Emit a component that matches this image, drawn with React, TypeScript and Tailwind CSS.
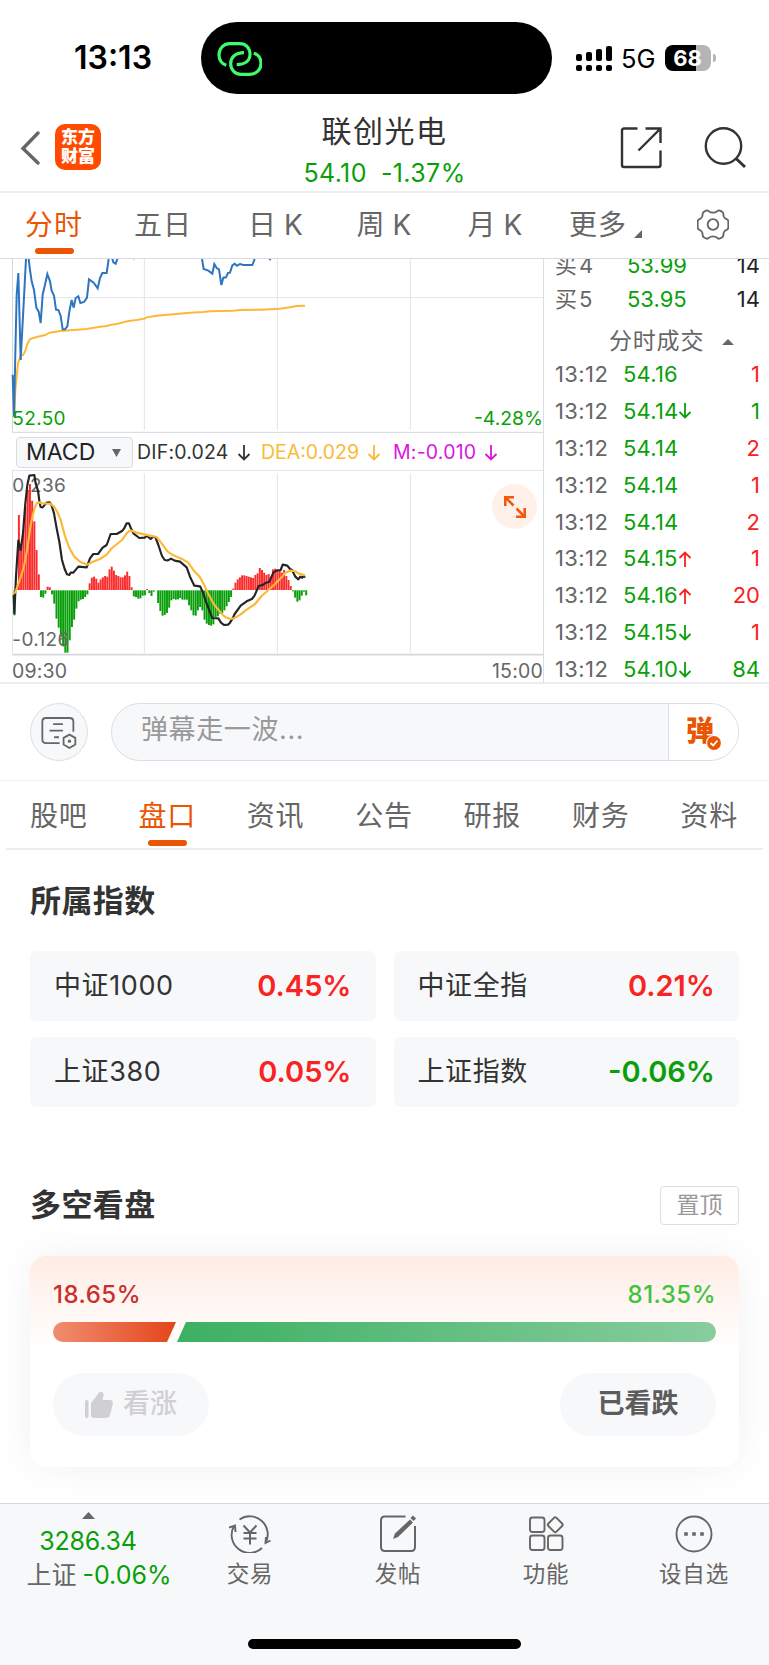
import type { ReactNode } from 'react';

interface Trade {
  price: string;
  dir?: 'up' | 'down';
  qty: string;
  sell?: boolean;
}

const trades: Trade[] = [
  { price: '54.16', qty: '1' },
  { price: '54.14', dir: 'down', qty: '1', sell: true },
  { price: '54.14', qty: '2' },
  { price: '54.14', qty: '1' },
  { price: '54.14', qty: '2' },
  { price: '54.15', dir: 'up', qty: '1' },
  { price: '54.16', dir: 'up', qty: '20' },
  { price: '54.15', dir: 'down', qty: '1' },
  { price: '54.10', dir: 'down', qty: '84', sell: true },
];

const bids = [
  { label: '买4', price: '53.99', qty: '14' },
  { label: '买5', price: '53.95', qty: '14' },
];

const indexes = [
  { name: '中证1000', change: '0.45%' },
  { name: '中证全指', change: '0.21%' },
  { name: '上证380', change: '0.05%' },
  { name: '上证指数', change: '-0.06%' },
];

const infoTabs = ['股吧', '盘口', '资讯', '公告', '研报', '财务', '资料'];

// MACD histogram, one value per minute
const bars = [
  -75, 12, 225, 130, 180, 250, 300, 318, 268, 206, 120, 47, -20, -22, -10, 10, 8, -12, -40, -85,
  -112, -140, -168, -187, -187, -150, -110, -88, -55, -33, -28, -26, -20, -12, 20, 37, 40, 34, 22, 32,
  38, 42, 40, 62, 70, 58, 45, 42, 38, 38, 44, 55, 42, 8, -18, -20, -25, -24, -16, -15,
  3, -8, -17, -4, 0, -38, -62, -76, -74, -68, -52, -30, -26, -28, -27, -23, -28, -28, -28, -45,
  -60, -75, -76, -60, -50, -60, -88, -100, -104, -106, -102, -80, -78, -70, -68, -60, -48, -35, -20, 4,
  22, 32, 38, 44, 44, 42, 40, 38, 36, 45, 50, 66, 60, 52, 45, 48, 40, 62, 64, 60,
  58, 52, 60, 42, 30, 12, -3, -22, -34, -30, -16, -4, -15,
];

function StatusBar() {
  const signal = [7, 9, 12, 15];
  return (
    <div className="flex h-[112px] pt-[22px]">
      <div className="flex h-[72px] w-[201px] items-center pl-[74px] text-[32px] font-semibold text-black">
        13:13
      </div>
      <div className="flex h-[72px] w-[351px] items-center rounded-full bg-black pl-[15px]">
        <svg className="h-9 w-[46px]" viewBox="0 0 138 108" fill="none" stroke="#3dfb6c" strokeWidth="9.5" strokeLinecap="butt">
          <path d="M31 76C17 71 9 60 9 45C9 26 22 11 41 11H71C90 11 102 24 102 43C102 62 88 74 62 74" />
          <path d="M84 38C58 38 44 52 44 71C44 88 56 103 75 103H101C121 103 135 89 135 70C135 56 127 44 113 40" />
        </svg>
      </div>
      <div className="flex h-[72px] items-center pl-6">
        <div className="flex items-end gap-1">
          {signal.map((h) => (
            <div key={h} className="flex flex-col gap-1">
              <div className="w-1.5 rounded-[2px] bg-black" style={{ height: h }} />
              <div className="h-1.5 w-1.5 rounded-[2px] bg-black" />
            </div>
          ))}
        </div>
        <span className="ml-[9px] pt-0.5 text-[25.5px] text-black">5G</span>
        <div className="ml-[9px] flex h-[26px] w-[46px] items-center justify-center rounded-[8px] bg-[linear-gradient(90deg,#000_68%,#b5b5b5_68%)] text-[22px] font-bold text-white">
          68
        </div>
        <div className="ml-0.5 h-2 w-[3px] rounded-r-full bg-[#b5b5b5]" />
      </div>
    </div>
  );
}

function Header() {
  return (
    <header className="flex h-[81px] border-b-2 border-[#ececee]">
      <div className="flex w-[284px] items-start pt-3 pl-5">
        <svg className="mt-[7px] h-[34px] w-5" viewBox="0 0 20 34" fill="none" stroke="#666" strokeWidth="3.4" strokeLinecap="round">
          <path d="M18 2L3 17.5L18 32" strokeLinejoin="miter" />
        </svg>
        <div className="ml-[15px] flex h-[46px] w-[46px] flex-col items-center justify-center rounded-[10px] bg-[#ff4a00] text-[17px] leading-[19px] font-black text-white">
          <span>东方</span>
          <span>财富</span>
        </div>
      </div>
      <div className="w-[201px] text-center">
        <div className="h-[42px] text-[30px] leading-[38px] tracking-[1.5px] text-[#333]">联创光电</div>
        <div className="flex justify-center gap-[14px] text-[25px] leading-[38px] tracking-[0.4px] text-[#0a9f0a]">
          <span>54.10</span>
          <span>-1.37%</span>
        </div>
      </div>
      <div className="flex flex-1 items-start gap-[42px] pt-[14px] pl-[135px]">
        <svg className="h-[43px] w-[42px]" viewBox="0 0 42 43" fill="none" stroke="#333" strokeWidth="2.4">
          <path d="M17.500 2.500H4Q2 2.500 2 4.500V39Q2 41 4 41H38.500Q40.500 41 40.500 39V24.500M25.500 2.500H40.500V17M40 3L18.500 24.500" />
        </svg>
        <svg className="h-[43px] w-[42px]" viewBox="0 0 42 43" fill="none" stroke="#333" strokeWidth="2.4">
          <circle cx="19.500" cy="20" r="17.700" />
          <path d="M31.500 32L41 41" strokeWidth="3" />
        </svg>
      </div>
    </header>
  );
}

function PeriodTabs() {
  return (
    <nav className="flex h-[66px] border-b border-[#d9dbe3] pt-2.5 text-[28px] leading-[44px] tracking-[1px] text-[#666]">
      <div className="flex w-[108px] flex-col items-center text-[#ea5504]">
        <span>分时</span>
        <div className="mt-[0.5px] h-[6px] w-[39px] rounded-full bg-[#ea5504]" />
      </div>
      <div className="w-[110px] text-center">五日</div>
      <div className="flex w-[116px] justify-center gap-[7px]">
        日<span>K</span>
      </div>
      <div className="flex w-[101px] justify-center gap-[7px]">
        周<span>K</span>
      </div>
      <div className="flex w-[121px] justify-center gap-[7px]">
        月<span>K</span>
      </div>
      <div className="flex w-[90px] items-start pl-[13px] whitespace-nowrap">
        更多
        <svg className="mt-[27px] ml-[7px] h-2 w-2 shrink-0" viewBox="0 0 8 8" fill="#666">
          <path d="M8 0V8H0Z" />
        </svg>
      </div>
      <div className="flex flex-1 justify-center pt-1.5 pl-2.5">
        <svg className="h-[31px] w-8" viewBox="0 0 96 93" fill="none" stroke="#666" strokeWidth="5.5" strokeLinejoin="round">
          <path d="M29 4Q33 4 36 7Q40 11 48 11Q56 11 60 7Q63 4 67 4Q78 8 79 13Q79 18 80 22Q82 28 90 31Q94 33 94 38V55Q94 60 90 62Q82 65 80 71Q79 76 79 80Q78 86 67 89Q63 90 60 86Q56 82 48 82Q40 82 36 86Q33 90 29 89Q18 86 17 80Q17 76 16 71Q14 65 6 62Q2 60 2 55V38Q2 33 6 31Q14 28 16 22Q17 18 17 13Q18 8 29 4Z" />
          <circle cx="48" cy="46.500" r="16" />
        </svg>
      </div>
    </nav>
  );
}

function PriceChart() {
  return (
    <svg className="block h-[174px] w-[543px]" viewBox="0 27 1629 522" fill="none">
      <path d="M37 143H1632M433 27V541M832 27V541M1231 27V541" stroke="#e2e4ec" strokeWidth="3" />
      <path d="M37.500 27V547M37 547H1632" stroke="#d5d7df" strokeWidth="3" />
      <path
        d="M43 500L46 420L54 340L62 318L70 314L76 302L82 282L90 267L110 261L136 255L148 248L180 243L210 241L260 237L300 230L320 228L330 225L350 222L385 213L410 210L434 206L440 202L470 197L520 193L570 188L610 186L630 184L700 182L720 180L780 179L840 176L870 172L890 168L915 167"
        stroke="#fbb937"
        strokeWidth="6"
      />
      <path
        d="M38 374L42 500L46 310L50 135L55 69L62 330L70 180L78 27M86 27L90 60L95 94L102 120L109 173L116 185L122 219L128 134L135 104L142 72L150 94L155 122L162 137L168 179L175 180L182 198L188 238L195 238L202 229L208 185L215 150L221 173L227 144L235 139L241 159L252 156L261 143L267 88L281 98L293 115L300 84L307 69L320 69L326 27M337 27L340 37L347 41L352 27M606 27L611 57L625 62L637 71L643 42L650 54L657 58L664 105L670 83L678 82L684 69L690 68L697 46L704 41L711 47L720 42L730 45L757 45L764 27M808 27L812 30"
        stroke="#2e74c0"
        strokeWidth="6"
      />
      <path d="M399 27h4" stroke="#2e74c0" strokeWidth="2" />
      <text x="37" y="525" fontSize="57" letterSpacing="1" fill="#0a9f0a">52.50</text>
      <text x="1629" y="525" fontSize="58" textAnchor="end" fill="#0a9f0a">-4.28%</text>
    </svg>
  );
}

function MacdChart() {
  return (
    <svg className="block h-[186px] w-[543px]" viewBox="0 30 1629 558" fill="none">
      <path d="M37 31.500H1632M433 40V579M832 40V579M1231 40V579M37.500 31V579" stroke="#e2e4ec" strokeWidth="3" />
      <path d="M37 584H1632" stroke="#d5d7df" strokeWidth="5" />
      {bars.map((v, i) => (
        <rect
          key={i}
          x={40.5 + i * 6.63}
          y={v > 0 ? 390 - v : 391}
          width="5.900"
          height={Math.abs(v)}
          fill={v > 0 ? '#fb2c2c' : '#0a9f0a'}
        />
      ))}
      <text x="37" y="96" fontSize="57" letterSpacing="1" fill="#666">0.236</text>
      <text x="37" y="559" fontSize="57" letterSpacing="1" fill="#666">-0.126</text>
      <path
        d="M41 405L43 460L48 350L55 242L62 270L69 220L76 130L82 75L88 47L103 45L107 70L114 92L119 130L122 141L128 142L140 128L149 127L155 137L162 160L170 205L178 245L186 300L194 327L201 343L208 345L212 338L220 338L235 320L260 322L270 295L280 282L294 282L308 263L320 255L332 222L350 222L366 213L372 206L380 190L387 190L394 208L400 220L418 234L434 233L440 227L452 237L459 231L466 231L475 255L486 288L494 300L504 301L513 296L524 302L540 305L560 322L570 350L583 377L600 379L608 395L618 425L632 462L637 474L655 475L663 488L672 495L684 494L690 488L698 475L704 462L722 437L740 424L757 416L764 406L770 392L776 378L790 374L798 368L808 365L820 338L829 332L842 330L848 314L862 317L870 327L876 330L886 350L895 358L901 350L907 353L911 347L915 353"
        stroke="#252525"
        strokeWidth="6.500"
        strokeLinejoin="round"
      />
      <path
        d="M38 397L46 398L52 380L60 358L72 320L82 265L92 195L102 150L110 130L117 127L128 130L150 131L162 140L172 156L182 180L195 228L207 262L222 289L240 305L262 314L275 307L300 297L320 284L336 264L366 240L380 220L390 211L410 218L432 223L450 227L470 231L485 250L503 275L520 286L548 298L565 308L580 330L600 352L612 374L625 402L640 430L658 453L674 470L690 477L702 475L722 463L740 449L765 432L785 408L805 390L825 372L845 352L855 339L870 332L884 333L897 341L915 346"
        stroke="#fbb937"
        strokeWidth="6.500"
        strokeLinejoin="round"
      />
    </svg>
  );
}

function TradePanel() {
  return (
    <div className="w-[226px] overflow-hidden border-l border-[#dcdee5] pr-[9px] pl-[11px] text-[22px] text-[#666]">
      <div className="-mt-[11px]">
        {bids.map((bid) => (
          <div key={bid.label} className="flex h-[34.500px] items-center">
            <span className="w-[72px] tracking-[2px]">{bid.label}</span>
            <span className="text-[#0a9f0a]">{bid.price}</span>
            <span className="ml-auto text-[#222]">{bid.qty}</span>
          </div>
        ))}
      </div>
      <div className="flex h-[39px] items-center pt-2.5 pl-[54px] text-[23px] tracking-[0.8px]">
        分时成交
        <svg className="ml-[18px] h-[6px] w-3" viewBox="0 0 12 6" fill="#666">
          <path d="M6 0L12 6H0Z" />
        </svg>
      </div>
      {trades.map((t, i) => (
        <div key={i} className="flex h-[36.900px] items-center">
          <span className="w-[68px] tracking-[0.4px]">13:12</span>
          <span className="tracking-[0.2px] text-[#0a9f0a]">{t.price}</span>
          {t.dir && (
            <span className={t.dir === 'up' ? 'text-[#fb2020]' : 'text-[#0a9f0a]'}>
              <SmallArrow up={t.dir === 'up'} />
            </span>
          )}
          <span className={t.sell ? 'ml-auto text-[#0a9f0a]' : 'ml-auto text-[#fb2020]'}>{t.qty}</span>
        </div>
      ))}
    </div>
  );
}

function SmallArrow({ up }: { up?: boolean }) {
  return (
    <svg className="h-4 w-[14px]" viewBox="0 0 14 16" fill="none" stroke="currentColor" strokeWidth="1.800">
      <path d={up ? 'M7 16V1.500M1.500 7L7 1.500L12.500 7' : 'M7 0V14.500M1.500 9L7 14.500L12.500 9'} />
    </svg>
  );
}

function ChartSection() {
  return (
    <section className="flex h-[425px] border-b-2 border-[#ededf0]">
      <div className="w-[543px]">
        <PriceChart />
        <div className="flex h-[37px] items-center pt-0.5 pl-4 text-[19.500px] whitespace-nowrap">
          <div className="flex h-[31px] w-[117px] shrink-0 items-center rounded-[4px] border border-[#d9dbe3] bg-[#f7f8fa] pl-[9px] text-[23px] text-[#222]">
            MACD
            <svg className="ml-[17px] h-2 w-[9px]" viewBox="0 0 9 8" fill="#666">
              <path d="M0 0H9L4.500 8Z" />
            </svg>
          </div>
          <div className="flex w-[124px] items-center gap-2 pl-1 tracking-[0.2px] text-[#333]">
            DIF:0.024
            <SmallArrow />
          </div>
          <div className="flex w-[132px] items-center gap-2 pl-1 text-[#fbb937]">
            DEA:0.029
            <SmallArrow />
          </div>
          <div className="flex items-center gap-2 pl-1 tracking-[0.2px] text-[#d916e0]">
            M:-0.010
            <SmallArrow />
          </div>
        </div>
        <div className="relative">
          <MacdChart />
          <div className="absolute top-[14px] right-1.5 flex h-[45px] w-[45px] items-center justify-center rounded-full bg-[#fff1ea]">
            <svg className="h-[22px] w-[22px]" viewBox="0 0 22 22" fill="none" stroke="#f0590e" strokeWidth="2.600">
              <path d="M10 1.300H1.300V10M1.500 1.500L9.500 9.500M12 20.700H20.700V12M20.500 20.500L12.500 12.500" />
            </svg>
          </div>
        </div>
        <div className="flex justify-between pl-3 text-[19.500px] leading-[30px] tracking-[0.2px] text-[#666]">
          <span>09:30</span>
          <span>15:00</span>
        </div>
      </div>
      <TradePanel />
    </section>
  );
}

function CommentBar() {
  return (
    <section className="flex h-[97px] items-center gap-[23px] border-b border-[#f2f2f4] px-[30px]">
      <div className="flex h-[58px] w-[58px] items-center justify-center rounded-full border border-[#dcdee5] bg-[#f7f8fa]">
        <svg className="mt-[2px] h-8 w-9" viewBox="0 0 108 98" fill="none" stroke="#666" strokeWidth="5.500">
          <path d="M56 80H14Q3 80 3 69V14Q3 3 14 3H86Q98 3 98 14V45M36 22H66M25 42H66M39 62H54" />
          <path d="M86 54L104 64V84L86 95L68 84V64Z" strokeLinejoin="round" />
          <circle cx="86" cy="74" r="5" fill="#666" stroke="none" />
        </svg>
      </div>
      <div className="flex h-[58px] flex-1 overflow-hidden rounded-full border border-[#dcdee5] bg-[#f7f8fa]">
        <div className="flex-1 pl-[29px] text-[27px] leading-[52px] tracking-[0.6px] text-[#999]">弹幕走一波...</div>
        <div className="w-[70px] border-l border-[#dcdee5] bg-white pt-[13px] pl-[17px]">
          <div className="relative w-[34px] text-[28px] leading-7 font-black text-[#ea5504]">
            弹
            <svg className="absolute top-[18px] left-5 h-4 w-4" viewBox="0 0 16 16">
              <circle cx="8" cy="8" r="8" fill="#fff" />
              <circle cx="8" cy="8" r="6.900" fill="#ea5504" />
              <path d="M4.500 8L7.200 10.500L11.500 5.500" fill="none" stroke="#fff" strokeWidth="1.800" />
            </svg>
          </div>
        </div>
      </div>
    </section>
  );
}

function InfoTabs() {
  return (
    <nav className="mx-1.5 flex h-[69px] justify-between border-b-2 border-[#ededf0] pt-[13px] pr-[25px] pl-6 text-[28px] leading-[44px] tracking-[0.8px] text-[#666]">
      {infoTabs.map((tab) => (
        <div key={tab} className={tab === '盘口' ? 'flex flex-col items-center text-[#ea5504]' : ''}>
          {tab}
          {tab === '盘口' && <div className="mt-[2px] h-[6px] w-[39px] shrink-0 rounded-full bg-[#ea5504]" />}
        </div>
      ))}
    </nav>
  );
}

function IndexSection() {
  return (
    <section className="px-[30px] pt-[29px]">
      <h2 className="text-[31px] leading-[44px] font-bold tracking-[0.4px] text-[#333]">所属指数</h2>
      <div className="mt-7 grid grid-cols-2 gap-x-[18px] gap-y-4">
        {indexes.map((item) => (
          <div key={item.name} className="flex h-[70px] items-center justify-between rounded-md bg-[#f7f8fa] px-6">
            <span className="text-[27px] tracking-[0.6px] text-[#333]">{item.name}</span>
            <span className={item.change[0] === '-' ? 'text-[29px] font-semibold text-[#0a9f0a]' : 'text-[29px] font-semibold text-[#fa2323]'}>
              {item.change}
            </span>
          </div>
        ))}
      </div>
    </section>
  );
}

function SentimentSection() {
  return (
    <section className="px-[30px] pt-[78px]">
      <div className="flex h-10 items-center justify-between">
        <h2 className="text-[31px] font-bold tracking-[0.4px] text-[#333]">多空看盘</h2>
        <div className="h-[39px] w-[79px] rounded-[4px] border border-[#dcdee5] text-center text-[23px] leading-[37px] text-[#999]">
          置顶
        </div>
      </div>
      <div className="mt-[31px] h-[211px] rounded-2xl bg-[linear-gradient(180deg,#ffece4_0%,#ffffff_45%)] px-[23px] pt-6 shadow-[0_0_40px_rgba(0,0,0,0.06)]">
        <div className="flex justify-between text-[24px] leading-[30px] font-medium tracking-[0.5px]">
          <span className="text-[#c9302c]">18.65%</span>
          <span className="text-[#3ec43e]">81.35%</span>
        </div>
        <svg className="mt-3 block h-5 w-[663px]" viewBox="0 0 663 20">
          <defs>
            <linearGradient id="bull">
              <stop offset="0" stopColor="#f08d70" />
              <stop offset="1" stopColor="#e5451a" />
            </linearGradient>
            <linearGradient id="bear">
              <stop offset="0" stopColor="#3cb062" />
              <stop offset="1" stopColor="#88cd9e" />
            </linearGradient>
          </defs>
          <path d="M10 0H123L114 20H10A10 10 0 0 1 10 0Z" fill="url(#bull)" />
          <path d="M133 0H653A10 10 0 0 1 653 20H124Z" fill="url(#bear)" />
        </svg>
        <div className="mt-[31px] flex justify-between text-[27px] font-medium">
          <div className="flex h-[63px] w-[156px] items-center justify-center gap-2.5 rounded-full bg-[#f7f8fa] text-[#d0d0d3]">
            <svg className="h-7 w-7" viewBox="0 0 28 28" fill="currentColor">
              <rect x="0" y="9" width="3.500" height="18" rx="1.500" />
              <path d="M6 13Q6 11 8 9.500L13 3Q14.500 0 17 1Q19 2 18.500 5L17.500 9H25Q28.500 9.500 27.800 13L25 24Q24 27 21 27H9Q6 27 6 24Z" />
            </svg>
            看涨
          </div>
          <div className="flex h-[63px] w-[156px] items-center justify-center rounded-full bg-[#f7f8fa] font-bold text-[#5c5c5c]">
            已看跌
          </div>
        </div>
      </div>
    </section>
  );
}

function NavItem({ label, children }: { label: string; children: ReactNode }) {
  return (
    <div className="flex w-[148px] flex-col items-center">
      <svg className="h-[38px] w-[42px]" viewBox="0 0 42 38" fill="none" stroke="#666" strokeWidth="1.900">
        {children}
      </svg>
      <span className="mt-px text-[22.500px] leading-[40px] tracking-[0.8px]">{label}</span>
    </div>
  );
}

function BottomBar() {
  return (
    <footer className="mt-auto h-[162px] border-t border-[#d5d7df] bg-[#f7f8fa] text-[#666]">
      <div className="flex h-[135px]">
        <div className="flex w-44 flex-col items-center pt-2">
          <svg className="h-[7px] w-[13px]" viewBox="0 0 13 7" fill="#666">
            <path d="M6.500 0L13 7H0Z" />
          </svg>
          <div className="mt-[5px] text-[25px] leading-[34px] tracking-[-0.2px] text-[#0a9f0a]">3286.34</div>
          <div className="flex items-center gap-1.5 pl-[22px] text-[25px] leading-[34px] whitespace-nowrap">
            上证<span className="text-[#0a9f0a]">-0.06%</span>
          </div>
        </div>
        <div className="flex pt-[11px]">
          <NavItem label="交易">
            <path d="M10.500 4.500A18 18 0 0 1 36.500 28M33 33A18 18 0 0 1 5 11M0 12.500L6 10.500L6.500 17M41.500 25.500L36.500 28L37 22" />
            <path d="M14.500 10.500L21 17.500L27.500 10.500M14.500 18H27.500M14.500 23.500H27.500M21 17.500V29.500" strokeWidth="2" />
          </NavItem>
          <NavItem label="发帖">
            <path d="M28.500 1.500H8Q4 1.500 4 5.500V32Q4 36 8 36H34Q38 36 38 32V11" strokeWidth="2" />
            <path d="M16 24L18 18.500L33 4.500L36 7.500L21 22Z" fill="#666" stroke="none" />
            <path d="M35 4.500L37.500 2" strokeWidth="4.500" />
          </NavItem>
          <NavItem label="功能">
            <rect x="5" y="2.500" width="14.500" height="14.500" rx="2.500" />
            <rect x="5" y="20.500" width="14.500" height="14.500" rx="2.500" />
            <rect x="23" y="20.500" width="14.500" height="14.500" rx="2.500" />
            <rect x="24.500" y="4" width="11.500" height="11.500" rx="1.800" transform="rotate(45 30.250 9.750)" />
          </NavItem>
          <NavItem label="设自选">
            <circle cx="21" cy="19" r="17.500" />
            <path d="M13 17.200v3.600M21 17.200v3.600M29 17.200v3.600" strokeWidth="3.600" />
          </NavItem>
        </div>
      </div>
      <div className="mx-auto h-2.5 w-[273px] rounded-full bg-black" />
    </footer>
  );
}

export default function App() {
  return (
    <div className="flex h-[1665px] w-[769px] flex-col overflow-hidden bg-white font-[Inter,'Noto_Sans_CJK_SC',sans-serif]">
      <StatusBar />
      <Header />
      <PeriodTabs />
      <ChartSection />
      <CommentBar />
      <InfoTabs />
      <IndexSection />
      <SentimentSection />
      <BottomBar />
    </div>
  );
}
